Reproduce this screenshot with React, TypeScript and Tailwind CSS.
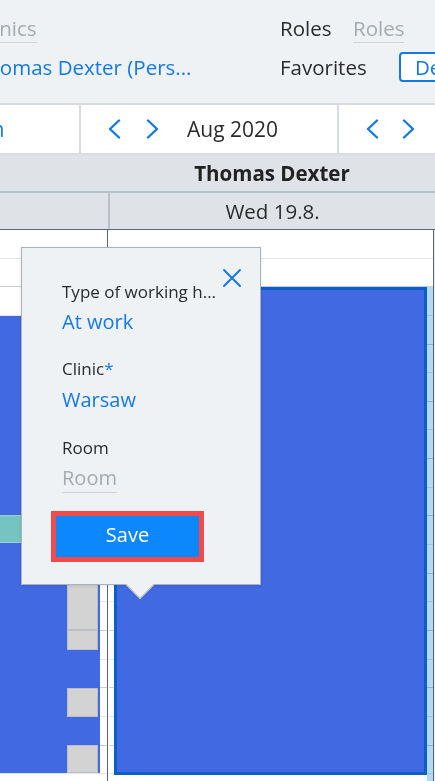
import React from "react";

function Chevron({ dir }: { dir: "l" | "r" }) {
  return (
    <svg width="14" height="20" viewBox="0 0 14 20" fill="none" stroke="#1479e6" strokeWidth="2.4" strokeLinecap="round" strokeLinejoin="round">
      {dir === "l" ? <path d="M12 1.5 L3 10 L12 18.5" /> : <path d="M2 1.5 L11 10 L2 18.5" />}
    </svg>
  );
}

function CloseX() {
  return (
    <svg width="20" height="20" viewBox="0 0 20 20" fill="none" stroke="#1479e6" strokeWidth="2" strokeLinecap="round">
      <path d="M2 2 L18 18 M18 2 L2 18" />
    </svg>
  );
}

const ROWS = Array.from({ length: 20 }, (_, i) => i);

function SlotLines() {
  return (
    <div className="flex flex-col">
      {ROWS.map((i) => (
        <div
          key={i}
          className={
            "h-[28.65px] border-b " + (i % 2 === 0 ? "border-[#e3e7ea]" : "border-[#c9ced3]")
          }
        />
      ))}
    </div>
  );
}

export default function App() {
  return (
    <div className="w-[435px] h-[781px] overflow-hidden relative bg-white font-['Open_Sans',sans-serif] text-[#2b2b2b]">
      {/* Top filter bar */}
      <div className="h-[105px] bg-[#eff2f5] border-b-2 border-[#d6dbe0] pt-[14px] flex overflow-hidden">
        <div className="w-[280px] shrink-0 flex flex-col gap-[9px] overflow-hidden">
          <div className="h-[29px]">
            <span className="-ml-[24px] inline-block border-b border-[#cfd4d9] text-[#a4abb3] text-[20.5px] leading-[28px]">
              Clinics
            </span>
          </div>
          <div className="h-[30px] flex items-center">
            <span className="-ml-[24px] whitespace-nowrap text-[#1479e6] text-[20.5px] leading-[28px]">
              Thomas Dexter (Pers...
            </span>
          </div>
        </div>
        <div className="shrink-0 flex flex-col gap-[9px]">
          <div className="h-[29px] flex text-[20.5px] leading-[28px]">
            <span className="w-[73px] shrink-0">Roles</span>
            <span className="inline-block h-[29px] border-b border-[#cfd4d9] text-[#a4abb3]">Roles</span>
          </div>
          <div className="h-[30px] flex items-center text-[20.5px]">
            <span className="w-[119px] shrink-0 leading-[28px]">Favorites</span>
            <div className="shrink-0 h-[30px] border-2 border-[#1479e6] rounded-[4px] pl-[14px] pr-[10px] flex items-center bg-white">
              <span className="text-[#1479e6] leading-[26px] whitespace-nowrap">Default</span>
            </div>
          </div>
        </div>
      </div>

      {/* Navigation row */}
      <div className="h-[50px] flex border-b-2 border-[#d8dde2] bg-white">
        <div className="w-[81px] shrink-0 border-r-2 border-[#d8dde2] flex items-center overflow-hidden">
          <span className="-ml-[15px] text-[21px] leading-[28px] text-[#1479e6]">m</span>
        </div>
        <div className="w-[258px] shrink-0 border-r-2 border-[#d8dde2] flex items-center pl-[26px]">
          <Chevron dir="l" />
          <div className="w-[25px]" />
          <Chevron dir="r" />
          <span className="ml-[27px] text-[21px] leading-[28px]">Aug 2020</span>
        </div>
        <div className="flex-1 flex items-center pl-[26px]">
          <Chevron dir="l" />
          <div className="w-[23px]" />
          <Chevron dir="r" />
        </div>
      </div>

      {/* Header: person */}
      <div className="h-[38px] bg-[#dfe3e8] border-b-2 border-[#b9c1c9] flex items-center">
        <div className="w-[109px]" />
        <div className="flex-1 text-center font-bold text-[20.5px] leading-[28px] text-[#222]">Thomas Dexter</div>
      </div>

      {/* Header: day */}
      <div className="h-[37px] bg-[#dfe3e8] border-b border-[#5d6670] flex">
        <div className="w-[110px] border-r-2 border-[#b9c1c9]" />
        <div className="flex-1 flex items-center justify-center text-[20.5px] leading-[28px]">Wed 19.8.</div>
      </div>

      {/* Body */}
      <div className="flex h-[560px]">
        {/* left column */}
        <div className="w-[108px] shrink-0 relative border-r border-[#5d666e]">
          <SlotLines />
          <div className="absolute left-0 top-[86px] w-[100px] h-[457px] bg-[#4169e1]">
            <div className="absolute left-0 right-0 top-[199px] h-[28px] bg-[#76c4c1] border-y border-[#9fcfcd]" />
            <div className="absolute left-[67px] top-[250px] w-[31px] h-[64px] bg-[#d3d3d3] border border-[#bcc0c4]" />
            <div className="absolute left-[67px] top-[314px] w-[31px] h-[20px] bg-[#d3d3d3] border border-[#bcc0c4]" />
            <div className="absolute left-[67px] top-[372px] w-[31px] h-[29px] bg-[#d3d3d3] border border-[#bcc0c4]" />
            <div className="absolute left-[67px] top-[429px] w-[31px] h-[28px] bg-[#d3d3d3] border border-[#bcc0c4]" />
          </div>
        </div>
        {/* right column */}
        <div className="w-[325px] shrink-0 relative border-r border-[#5d666e] ml-[1px]">
          <SlotLines />
          <div className="absolute left-[318px] right-0 top-[57px] bottom-0 bg-[#b4d9f2] mix-blend-multiply" />
          <div className="absolute left-[5px] top-[57px] w-[313px] h-[488px] bg-[#4169e1] border-[3px] border-[#0b60c8]" />
        </div>
        <div className="flex-1 bg-[#e9edf0]" />
      </div>

      {/* Popover */}
      <div className="absolute left-[21px] top-[247px] w-[240px] h-[338px] bg-[#eff2f5] border border-[#a9b3bd] shadow-[0_1px_3px_rgba(0,0,0,0.12)]">
        <div className="absolute left-[108px] bottom-[-11px] w-[20px] h-[20px] rotate-45 bg-[#eff2f5] border-r border-b border-[#a9b3bd]" />
        <button className="absolute left-[200px] top-[20px]">
          <CloseX />
        </button>
        <div className="relative pl-[40px] pt-[32px] flex flex-col">
          <span className="text-[17px] leading-[24px] text-[#2b2b2b] whitespace-nowrap">Type of working h...</span>
          <span className="mt-[4px] text-[20px] leading-[28px] text-[#1479e6]">At work</span>
          <span className="mt-[21px] text-[17px] leading-[24px]">
            Clinic<span className="text-[#1479e6]">*</span>
          </span>
          <span className="mt-[5px] text-[20px] leading-[28px] text-[#1479e6]">Warsaw</span>
          <span className="mt-[22px] text-[17px] leading-[24px]">Room</span>
          <span className="mt-[4px] self-start h-[29px] border-b border-[#cdd3d8] text-[20px] leading-[28px] text-[#a4abb3]">Room</span>
          <div className="mt-[18px] -ml-[11px] w-[153px] h-[51px] border-[5px] border-[#f24a4a]">
            <div className="w-full h-full bg-[#0d88fc] flex items-center justify-center pb-[3px] text-white text-[20px] leading-[28px]">
              Save
            </div>
          </div>
        </div>
      </div>
    </div>
  );
}
